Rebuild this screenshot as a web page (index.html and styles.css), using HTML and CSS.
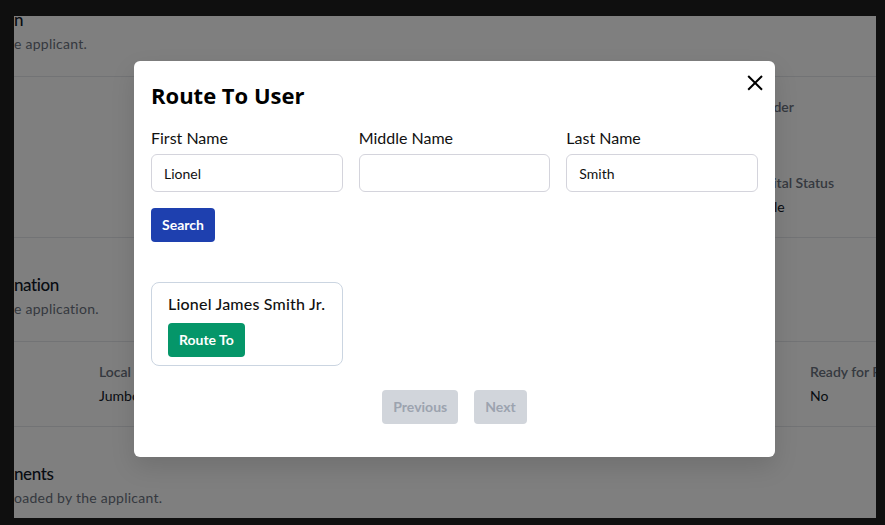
FILE: index.html
```html
<!DOCTYPE html>
<html lang="en">
<head>
<meta charset="utf-8">
<title>Route To User</title>
<link rel="stylesheet" href="styles.css">
</head>
<body>
<div class="frame">
  <main class="page">
    <section class="section">
      <header class="section-head">
        <h2 class="section-title">n</h2>
        <p class="section-desc">e applicant.</p>
      </header>
      <div class="fields fields-personal">
        <div class="field"><div class="field-label">Gender</div><div class="field-value"></div></div>
        <div class="field"><div class="field-label">Marital Status</div><div class="field-value">Single</div></div>
      </div>
    </section>
    <section class="section">
      <header class="section-head">
        <h2 class="section-title">nation</h2>
        <p class="section-desc">e application.</p>
      </header>
      <div class="fields fields-application">
        <div class="field"><div class="field-label">Local Office</div><div class="field-value">Jumbo</div></div>
        <div class="field"><div class="field-label">Ready for Review</div><div class="field-value">No</div></div>
      </div>
    </section>
    <section class="section">
      <header class="section-head">
        <h2 class="section-title">nents</h2>
        <p class="section-desc">oaded by the applicant.</p>
      </header>
    </section>
  </main>

  <div class="backdrop">
    <div class="modal" role="dialog" aria-labelledby="modal-title">
      <button class="modal-close" type="button" aria-label="Close">
        <svg width="16" height="16" viewBox="0 0 16 16" aria-hidden="true">
          <path d="M1.2 1 L15 14.8 M15 1 L1.2 14.8" stroke="#000" stroke-width="2" fill="none"/>
        </svg>
      </button>
      <h1 class="modal-title" id="modal-title">Route To User</h1>
      <form class="search-form">
        <div class="name-grid">
          <label class="form-field">
            <span class="form-label">First Name</span>
            <input class="form-input" type="text" value="Lionel">
          </label>
          <label class="form-field">
            <span class="form-label">Middle Name</span>
            <input class="form-input" type="text" value="">
          </label>
          <label class="form-field">
            <span class="form-label">Last Name</span>
            <input class="form-input" type="text" value="Smith">
          </label>
        </div>
        <button class="btn btn-primary" type="button">Search</button>
      </form>
      <div class="results">
        <div class="result-card">
          <div class="result-name">Lionel James Smith Jr.</div>
          <button class="btn btn-success" type="button">Route To</button>
        </div>
      </div>
      <div class="pager">
        <button class="btn btn-disabled" type="button" disabled>Previous</button>
        <button class="btn btn-disabled" type="button" disabled>Next</button>
      </div>
    </div>
  </div>
</div>
</body>
</html>
```

FILE: styles.css
```css
* {
  box-sizing: border-box;
}

html, body {
  margin: 0;
  padding: 0;
}

body {
  background: #0f0f0f;
  padding: 16px 9px 7px 14px;
  font-family: Lato, "Liberation Sans", sans-serif;
  color: #111827;
}

.frame {
  position: relative;
  height: 502px;
  overflow: hidden;
  background: #ffffff;
}

/* background page */
.page {
  margin-top: -43px;
}

.section + .section {
  border-top: 1px solid #e5e7eb;
}

.section-head {
  padding: 33px 0 22px 0;
}

.section-title {
  margin: 0;
  font-size: 17px;
  line-height: 28px;
  font-weight: 500;
  letter-spacing: -0.4px;
  color: #111827;
  white-space: nowrap;
}

.section-desc {
  margin: 0;
  font-size: 14px;
  line-height: 20px;
  letter-spacing: 0.25px;
  color: #6b7280;
  white-space: nowrap;
}

.fields {
  display: grid;
  row-gap: 32px;
  padding: 20px 0;
  border-top: 1px solid #e5e7eb;
}

.fields-personal {
  grid-template-columns: 734px 1fr;
}

.fields-personal .field {
  grid-column: 2;
}

.fields-application {
  grid-template-columns: 85px 711px 1fr;
}

.fields-application .field:first-child {
  grid-column: 2;
}

.field {
  display: flex;
  flex-direction: column;
  gap: 4px;
  white-space: nowrap;
  min-width: 0;
}

.field-label {
  font-size: 14px;
  line-height: 20px;
  color: #6b7280;
  font-weight: 600;
}

.field-value {
  font-size: 14px;
  line-height: 20px;
  min-height: 20px;
  color: #111827;
}

/* overlay + modal */
.backdrop {
  position: absolute;
  inset: 0;
  background: rgba(0, 0, 0, 0.5);
  display: flex;
  align-items: flex-start;
  justify-content: flex-start;
  padding: 45px 0 0 120px;
}

.modal {
  position: relative;
  width: 641px;
  background: #ffffff;
  border-radius: 6px;
  padding: 20px 17px 33px 17px;
  box-shadow: 0 10px 25px rgba(0, 0, 0, 0.12);
}

.modal-close {
  position: absolute;
  top: 14px;
  right: 12px;
  width: 16px;
  height: 16px;
  padding: 0;
  border: 0;
  background: none;
  display: block;
  cursor: pointer;
}

.modal-close svg {
  display: block;
}

.modal-title {
  margin: 0 0 17px 0;
  font-family: "Open Sans", Lato, sans-serif;
  font-size: 22px;
  line-height: 28px;
  font-weight: 700;
  color: #000000;
}

.search-form {
  display: flex;
  flex-direction: column;
  align-items: flex-start;
  gap: 16px;
}

.name-grid {
  width: 100%;
  display: grid;
  grid-template-columns: repeat(3, 1fr);
  column-gap: 16px;
}

.form-field {
  display: flex;
  flex-direction: column;
  gap: 4px;
}

.form-label {
  font-size: 16px;
  line-height: 24px;
  color: #111111;
}

.form-input {
  width: 100%;
  height: 38px;
  border: 1px solid #d4d4dc;
  border-radius: 6px;
  padding: 0 12px;
  font-family: Lato, "Liberation Sans", sans-serif;
  font-size: 14px;
  color: #111111;
  background: #ffffff;
  outline: none;
}

.btn {
  border: 0;
  border-radius: 4px;
  padding: 8px 11px;
  font-family: Lato, "Liberation Sans", sans-serif;
  font-size: 14px;
  line-height: 18px;
  font-weight: 700;
  cursor: pointer;
}

.btn-primary {
  background: #1e40af;
  color: #ffffff;
}

.btn-success {
  background: #059669;
  color: #ffffff;
}

.btn-disabled {
  background: #d1d5db;
  color: #9ca3af;
  cursor: default;
}

.results {
  margin-top: 40px;
  display: grid;
  grid-template-columns: repeat(3, 1fr);
  column-gap: 16px;
}

.result-card {
  border: 1px solid #cbd5e1;
  border-radius: 8px;
  padding: 9px 16px 8px 16px;
  display: flex;
  flex-direction: column;
  align-items: flex-start;
  gap: 7px;
}

.result-name {
  font-size: 16px;
  line-height: 24px;
  letter-spacing: 0.2px;
  color: #111111;
  font-weight: 500;
  white-space: nowrap;
}

.pager {
  margin-top: 24px;
  display: flex;
  justify-content: center;
  gap: 16px;
}
```
